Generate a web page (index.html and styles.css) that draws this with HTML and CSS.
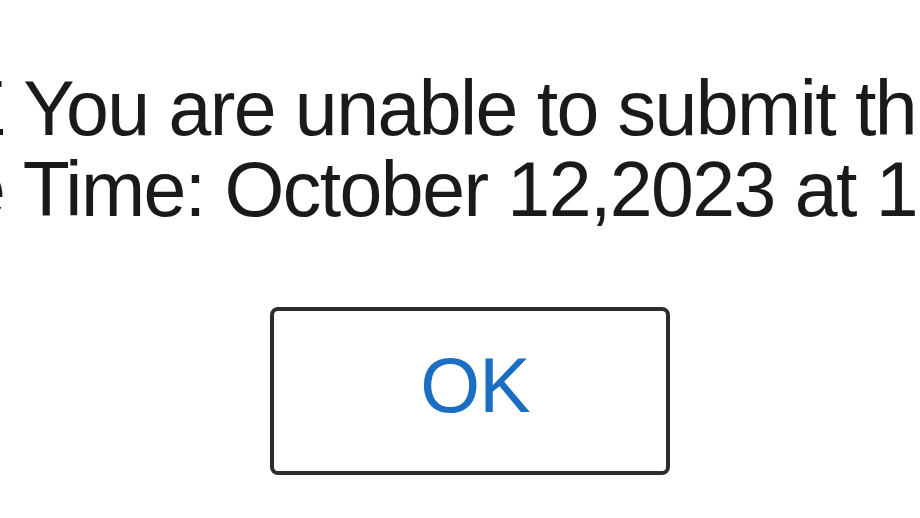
FILE: index.html
```html
<!DOCTYPE html>
<html>
<head>
<meta charset="utf-8">
<link rel="stylesheet" href="styles.css">
</head>
<body>
<div class="dialog">
  <div class="message">
    <p class="line line-one">E You are unable to submit this</p>
    <p class="line line-two">e Time: October 12,2023 at 15:00</p>
  </div>
  <div class="actions">
    <button class="ok-button" type="button">OK</button>
  </div>
</div>
</body>
</html>
```

FILE: styles.css
```css
html, body {
  margin: 0;
  padding: 0;
  background: #ffffff;
}

.dialog {
  width: 920px;
  height: 518px;
  overflow: hidden;
  font-family: "Liberation Sans", Arial, sans-serif;
  font-size: 77px;
  color: #1a1a1a;
}

.message {
  padding-top: 68px;
}

.line {
  margin: 0;
  line-height: 81px;
  white-space: nowrap;
  letter-spacing: -1.55px;
}

.line-one {
  margin-left: -45px;
}

.line-two {
  margin-left: -37px;
}

.actions {
  display: flex;
  padding-left: 270px;
  margin-top: 77px;
}

.ok-button {
  box-sizing: border-box;
  width: 400px;
  height: 168px;
  border: 4px solid #2f2c29;
  border-radius: 8px;
  background: #ffffff;
  color: #1b6ec2;
  font-family: "Liberation Sans", Arial, sans-serif;
  font-size: 77px;
  letter-spacing: -1px;
  line-height: normal;
  display: flex;
  align-items: center;
  justify-content: center;
  padding: 0 0 12px 10px;
  margin: 0;
}
```
